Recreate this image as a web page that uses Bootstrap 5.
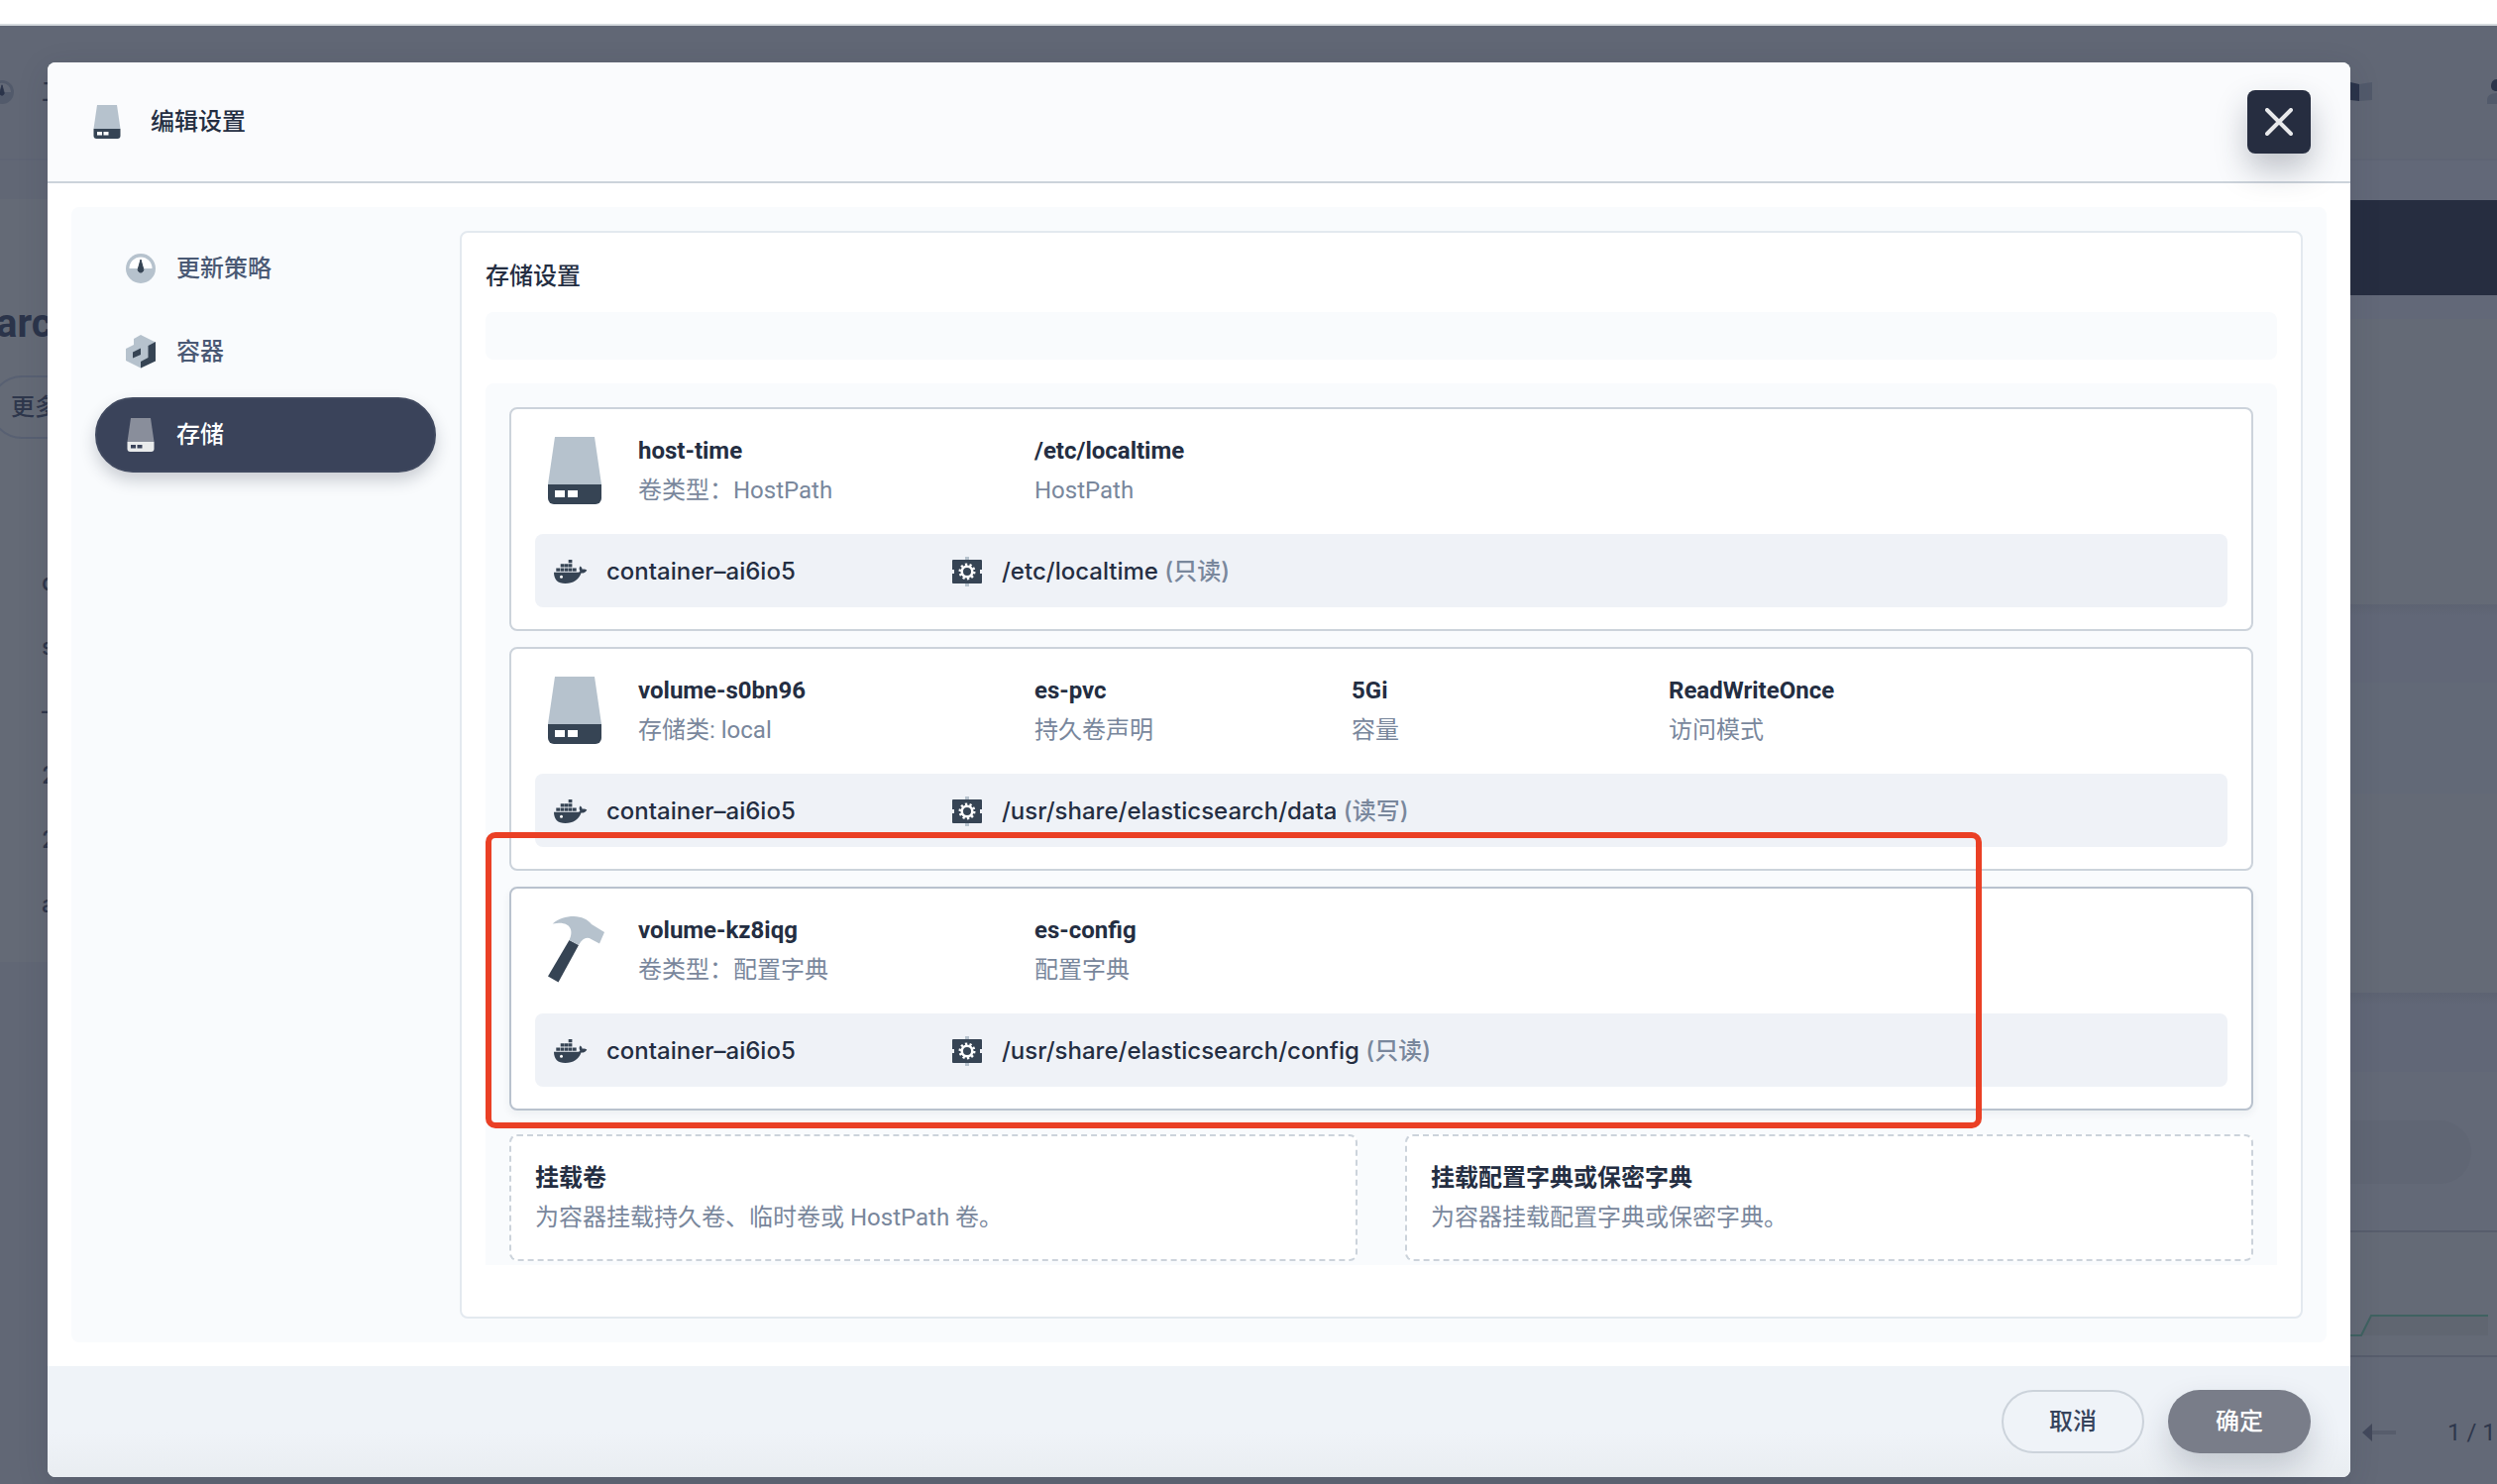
<!DOCTYPE html>
<html lang="zh-CN">
<head>
<meta charset="utf-8">
<meta name="viewport" content="width=device-width, initial-scale=1">
<title>编辑设置</title>
<link href="https://cdn.jsdelivr.net/npm/bootstrap@5.3.0/dist/css/bootstrap.min.css" rel="stylesheet">
<style>
body{font-family:Roboto,"Noto Sans CJK SC",sans-serif;font-size:24px;line-height:40px;color:#242e42;background:#616775;min-height:100vh;overflow:hidden;position:relative}
.top-strip{height:26px;background:#fff;border-bottom:2px solid #d5dade}

/* dimmed page behind the dialog */
.under-page{position:absolute;inset:26px 0 0 0;overflow:hidden;color:#2e374c}
.under-left{width:240px;white-space:nowrap;background:#616775}
.under-right{width:148px;white-space:nowrap}
.ul-head{height:136px;border-bottom:2px solid #5e6474;font-weight:500}
.ul-head svg{flex:none;margin-left:-10px;margin-right:28px}
.ul-gap{height:39px}
.ul-panel{background:#646a76;height:770px}
.ul-name{font-size:40px;line-height:48px;font-weight:700;padding-top:102px;color:#2b344a;margin-left:-4px}
.ul-more{height:64px;width:140px;margin:28px 0 0 -10px;padding-left:19px;border:2px solid #586072;border-radius:32px;font-weight:500;line-height:60px}
.ul-facts{padding:112px 0 0 42px;line-height:65px;font-family:Inter,sans-serif;font-weight:500}
.ur-head{height:136px;border-bottom:2px solid #5e6474}
.ur-gap{height:40px;background:#626878}
.ur-dark{height:96px;background:#262d40}
.ur-soft{height:24px;background:#626878}
.ur-a{height:288px;background:#646a76}
.ur-b{height:79px;background:linear-gradient(#5d6372,#616777 12px)}
.ur-c{height:313px;background:#646a76}
.ur-row{height:112px;background:#626977}
.ur-d{height:80px;background:linear-gradient(#5d6372,#616777 12px)}
.ur-e{height:162px;background:#636977;border-bottom:2px solid #575d6c;padding-top:49px}
.ur-pill{height:64px;width:122px;border-radius:0 32px 32px 0;background:#606674}
.ur-f{height:126px;background:#646a76;border-bottom:2px solid #575d6c}
.ur-g{background:#636977;height:128px;padding:54px 0 0 12px;line-height:44px}

.dialog-wrap{position:relative;z-index:3;padding:37px 148px 7px 48px}
.dialog-box{background:#fff;border-radius:8px;box-shadow:0 8px 32px rgba(36,46,66,.14)}
.dialog-head{height:122px;padding:0 40px 0 46px;background:#fafbfd;border-bottom:2px solid #ccd3db;border-radius:8px 8px 0 0}
.dialog-head h1{font-size:24px;line-height:40px;font-weight:500;margin:0}
.title-icon{margin-right:30px}
.close-btn{width:64px;height:64px;border-radius:8px;background:#262d40;border:0;padding:0;box-shadow:0 16px 32px rgba(36,46,66,.28)}
.dialog-inner{margin:24px;padding:24px;background:#f9fbfd;border-radius:8px}
.side-menu{width:344px;gap:8px}
.side-menu a{height:76px;border-radius:38px;padding:0 29px;gap:21px;color:#4a5974;font-weight:500;text-decoration:none;border:2px solid transparent}
.side-menu a.active{background:#3a435a;border-color:#414a60;color:#fff;box-shadow:0 8px 16px rgba(36,46,66,.22);--a:#898e9b;--b:#e9ebec;--c:#3a435a}
.content-panel{border:2px solid #e3e9ef;border-radius:8px;background:#fff;padding:24px 24px 52px;min-width:0}
.content-panel h2{font-size:24px;line-height:40px;font-weight:500;margin:0 0 16px}
.hint-bar{height:48px;background:#f9fbfd;border-radius:8px;margin-bottom:24px}
.vol-list{background:#f9fbfd;border-radius:8px 8px 0 0;padding:24px 24px 4px}
.vol-item{border:2px solid #ccd3db;border-radius:8px;background:#fff;padding:22px 24px;margin-bottom:16px}
.vol-item.hovered{border-color:#b9c2ce;box-shadow:0 4px 8px rgba(36,46,66,.06);margin-bottom:24px}
.vol-head{margin-bottom:24px}
.vol-icon{width:104px;padding:6px 0 0 13px;line-height:0}
.c-name{width:400px}
.c-mid{width:320px}
.strong-t{font-weight:700}
.sub-t{color:#79879c}
.mount-row{height:74px;background:#eff2f7;border-radius:8px;font-family:Inter,"Noto Sans CJK SC",sans-serif;font-weight:500;padding:2px 19px 0}
.mount-row svg{margin-right:19px}
.m-left{width:401px}
.add-card{flex:1 1 0;border:2px dashed #ccd3db;border-radius:8px;background:#fff;padding:22px 24px;text-align:left;color:inherit;line-height:40px}
.dialog-foot{height:112px;padding:0 40px;background:linear-gradient(#eff3f8 60%,#e9edf1);border-radius:0 0 8px 8px;gap:24px}
.dialog-foot button{width:144px;height:64px;border-radius:32px;font-weight:500;line-height:1;padding:0}
.b-cancel{border:2px solid #ccd3db;background:#eff3f8;color:#36435c}
.b-ok{border:0;background:#797d89;color:#fff;box-shadow:0 16px 32px rgba(36,46,66,.2)}

/* annotation frame drawn over the dialog */
.red-frame{position:absolute;left:490px;top:840px;width:1510px;height:299px;border:6px solid #ea4025;border-radius:10px;z-index:5;pointer-events:none}
</style>
<script src="https://cdn.jsdelivr.net/npm/bootstrap@5.3.0/dist/js/bootstrap.bundle.min.js"></script>
</head>
<body>
<svg width="0" height="0" class="position-absolute">
<defs>
<symbol id="drive" viewBox="0 0 54 68"><path d="M7 0h40l7 48H0z" fill="var(--a,#b6c2cd)"/><path d="M0 48h54v14a6 6 0 0 1-6 6H6a6 6 0 0 1-6-6z" fill="var(--b,#364454)"/><path d="M7 54h10v7H7zm13 0h10v7H20z" fill="var(--c,#fff)"/></symbol>
<symbol id="meter" viewBox="0 0 30 30"><circle cx="15" cy="15" r="15" fill="var(--a,#b6c2cd)"/><path d="M3.500 15a11.500 11.500 0 0 1 23 0z" fill="var(--c,#fff)"/><path d="M15 6l2.700 9.500a2.800 2.800 0 1 1-5.400 0z" fill="var(--b,#364454)" stroke="var(--b,#364454)"/></symbol>
<symbol id="cube" viewBox="0 0 30 34"><path d="M8 4l7-4 15 7.500V26l-15 7.500L0 26V14l8-4z" fill="#b6c2cd"/><path d="M22.500 11L30 7v19.500l-15 7V27l7.500-4zM7 17.500l8-4V20l-8 3.500z" fill="#364454"/></symbol>
<symbol id="docker" viewBox="0 0 34 24"><path d="M14.700 0h3.700v3.200h-3.700zM6.700 4.300h3.700v3.200H6.700zm4 0h3.700v3.200h-3.700zm4 0h3.700v3.200h-3.700zM2.300 8.600H6v3.200H2.300zm4.200 0h3.700v3.200H6.500zm4.200 0h3.700v3.200h-3.700zm4.100 0h3.700v3.200h-3.700zm4.200 0h3.700v3.200H19zM0 12.700h24.500c1.600-.2 2-.7 1.700-1.600-.8-1.500-.8-3 .3-4.600 1.500 1 2 2 2.200 3.300 1.700-.4 3.300-.1 4.600.7-.9 2.200-2.800 3.200-5.800 3.100C25 20.500 19.500 24 11.500 24 4 24 0 20 0 12.700z" fill="#364454"/><circle cx="7.500" cy="17.300" r="1.500" fill="#fff"/></symbol>
<symbol id="gearbox" viewBox="0 0 32 32"><path d="M14 1h4v30h-4z" fill="#b6c2cd"/><path d="M2 4h28a1 1 0 0 1 1 1v9h-2v4h2v9a1 1 0 0 1-1 1H2a1 1 0 0 1-1-1v-9h2v-4H1V5a1 1 0 0 1 1-1z" fill="#364454"/><circle cx="16" cy="16" r="5.300" fill="none" stroke="#fff" stroke-width="2.600"/><circle cx="16" cy="16" r="7.300" fill="none" stroke="#fff" stroke-width="2.400" stroke-dasharray="2.290 2.296"/></symbol>
<symbol id="hammer" viewBox="0 0 58 68"><path d="M21.500 24l9.500 5L10.500 66.500 0 60.500z" fill="#364454"/><path d="M4.700 7.500C11 2 18 0 26 0c8 .3 14 3 18 8l13 8-5 11.500-8-4.300c-5-3-9-1-13 5.800l-9.500-5C26 15 23 6.500 11 6.800z" fill="#b6c2cd"/></symbol>
</defs></svg>

<div class="under-page d-flex justify-content-between" aria-hidden="true">
  <div class="under-left">
    <div class="ul-head d-flex align-items-center"><svg width="24" height="24" style="--a:#525a6b;--b:#2b344a;--c:#636977"><use href="#meter"/></svg>工</div>
    <div class="ul-gap"></div>
    <div class="ul-panel">
      <div class="ul-name">arch</div>
      <div class="ul-more">更多</div>
      <div class="ul-facts"><div>d</div><div>s</div><div>–</div><div>2</div><div>2</div><div>a</div></div>
    </div>
  </div>
  <div class="under-right">
    <div class="ur-head d-flex align-items-center justify-content-between">
      <svg width="22" height="20"><path d="M0 0l9 2v17l-9-1z" fill="#2b344a"/><path d="M9 2l13-2v18L9 19z" fill="#525a6b"/></svg>
      <svg width="10" height="26"><path d="M10 0C6 0 4 3 4 7c0 3 2 5 6 5z" fill="#2b344a"/><path d="M10 14C3 14 0 17 0 21v4h10z" fill="#525a6b"/></svg>
    </div>
    <div class="ur-gap"></div>
    <div class="ur-dark"></div>
    <div class="ur-soft"></div>
    <div class="ur-a"></div>
    <div class="ur-b"></div>
    <div class="ur-c"><div class="ur-row"></div></div>
    <div class="ur-d"></div>
    <div class="ur-e"><div class="ur-pill"></div></div>
    <div class="ur-f"><svg width="140" height="106"><path d="M0 104h11l10-20h118v20z" fill="#606671"/><path d="M0 104h11l10-20h118" fill="none" stroke="#3f6261" stroke-width="2"/></svg></div>
    <div class="ur-g d-flex align-items-start"><svg width="34" height="44"><path d="M10 22h24" stroke="#575d6c" stroke-width="4"/><path d="M0 22l10-9v18z" fill="#43495c"/></svg><span class="ms-5 ps-1">1 / 1</span></div>
  </div>
</div>

<div class="top-strip"></div>
<div class="dialog-wrap">
<div class="dialog-box" role="dialog" aria-labelledby="dlgTitle">
  <header class="dialog-head d-flex align-items-center">
    <svg class="title-icon" width="28" height="34"><use href="#drive"/></svg>
    <h1 id="dlgTitle">编辑设置</h1>
    <button type="button" class="close-btn ms-auto d-flex align-items-center justify-content-center" aria-label="关闭"><svg width="28" height="28"><path d="M2 2l24 24M26 2L2 26" stroke="#e8e9eb" stroke-width="4" stroke-linecap="round"/></svg></button>
  </header>
  <div class="dialog-inner d-flex gap-4">
    <nav class="side-menu d-flex flex-column flex-shrink-0">
      <a href="#" class="d-flex align-items-center"><svg width="30" height="30"><use href="#meter"/></svg>更新策略</a>
      <a href="#" class="d-flex align-items-center"><svg width="30" height="34"><use href="#cube"/></svg>容器</a>
      <a href="#" class="active d-flex align-items-center"><svg width="30" height="34"><use href="#drive"/></svg>存储</a>
    </nav>
    <main class="content-panel flex-grow-1">
      <h2>存储设置</h2>
      <div class="hint-bar"></div>
      <div class="vol-list">
        <section class="vol-item">
          <div class="vol-head d-flex">
            <div class="vol-icon"><svg width="54" height="68"><use href="#drive"/></svg></div>
            <div class="c-name"><div class="strong-t">host-time</div><div class="sub-t">卷类型：HostPath</div></div>
            <div class="c-mid"><div class="strong-t">/etc/localtime</div><div class="sub-t">HostPath</div></div>
          </div>
          <div class="mount-row d-flex align-items-center">
            <div class="m-left d-flex align-items-center"><svg width="34" height="24"><use href="#docker"/></svg>container–ai6io5</div>
            <svg width="32" height="32"><use href="#gearbox"/></svg><div>/etc/localtime <span class="sub-t">(只读)</span></div>
          </div>
        </section>
        <section class="vol-item">
          <div class="vol-head d-flex">
            <div class="vol-icon"><svg width="54" height="68"><use href="#drive"/></svg></div>
            <div class="c-name"><div class="strong-t">volume-s0bn96</div><div class="sub-t">存储类: local</div></div>
            <div class="c-mid"><div class="strong-t">es-pvc</div><div class="sub-t">持久卷声明</div></div>
            <div class="c-mid"><div class="strong-t">5Gi</div><div class="sub-t">容量</div></div>
            <div class="c-mid"><div class="strong-t">ReadWriteOnce</div><div class="sub-t">访问模式</div></div>
          </div>
          <div class="mount-row d-flex align-items-center">
            <div class="m-left d-flex align-items-center"><svg width="34" height="24"><use href="#docker"/></svg>container–ai6io5</div>
            <svg width="32" height="32"><use href="#gearbox"/></svg><div>/usr/share/elasticsearch/data <span class="sub-t">(读写)</span></div>
          </div>
        </section>
        <section class="vol-item hovered">
          <div class="vol-head d-flex">
            <div class="vol-icon"><svg width="58" height="68"><use href="#hammer"/></svg></div>
            <div class="c-name"><div class="strong-t">volume-kz8iqg</div><div class="sub-t">卷类型：配置字典</div></div>
            <div class="c-mid"><div class="strong-t">es-config</div><div class="sub-t">配置字典</div></div>
          </div>
          <div class="mount-row d-flex align-items-center">
            <div class="m-left d-flex align-items-center"><svg width="34" height="24"><use href="#docker"/></svg>container–ai6io5</div>
            <svg width="32" height="32"><use href="#gearbox"/></svg><div>/usr/share/elasticsearch/config <span class="sub-t">(只读)</span></div>
          </div>
        </section>
        <div class="d-flex gap-5">
          <button type="button" class="add-card"><div class="strong-t">挂载卷</div><div class="sub-t">为容器挂载持久卷、临时卷或 HostPath 卷。</div></button>
          <button type="button" class="add-card"><div class="strong-t">挂载配置字典或保密字典</div><div class="sub-t">为容器挂载配置字典或保密字典。</div></button>
        </div>
      </div>
    </main>
  </div>
  <footer class="dialog-foot d-flex align-items-center justify-content-end">
    <button type="button" class="b-cancel">取消</button>
    <button type="button" class="b-ok">确定</button>
  </footer>
</div>
</div>
<div class="red-frame"></div>
</body>
</html>
